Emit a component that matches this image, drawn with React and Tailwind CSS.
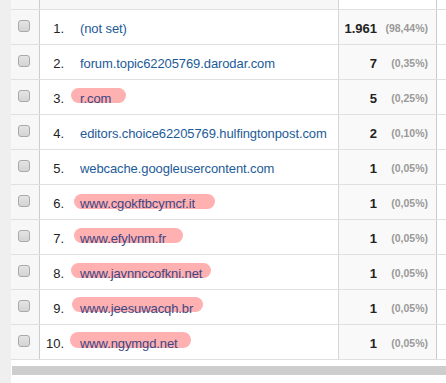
import React from "react";

const rows = [
  { n: "1.", t: "(not set)", c: "1.961", p: "(98,44%)" },
  { n: "2.", t: "forum.topic62205769.darodar.com", c: "7", p: "(0,35%)" },
  { n: "3.", t: "r.com", c: "5", p: "(0,25%)", pill: { l: 31, w: 55, t: 8, h: 15 } },
  { n: "4.", t: "editors.choice62205769.hulfingtonpost.com", c: "2", p: "(0,10%)" },
  { n: "5.", t: "webcache.googleusercontent.com", c: "1", p: "(0,05%)" },
  { n: "6.", t: "www.cgokftbcymcf.it", c: "1", p: "(0,05%)", pill: { l: 34, w: 141, t: 9, h: 15 } },
  { n: "7.", t: "www.efylvnm.fr", c: "1", p: "(0,05%)", pill: { l: 34, w: 109, t: 8, h: 15 } },
  { n: "8.", t: "www.javnnccofkni.net", c: "1", p: "(0,05%)", pill: { l: 31, w: 140, t: 8, h: 15 } },
  { n: "9.", t: "www.jeesuwacqh.br", c: "1", p: "(0,05%)", pill: { l: 32, w: 131, t: 7, h: 15 } },
  { n: "10.", t: "www.ngymgd.net", c: "1", p: "(0,05%)", pill: { l: 30, w: 121, t: 7, h: 16 } },
];

function Checkbox() {
  return (
    <div className="w-[12px] h-[12px] rounded-[3px] border border-[#a9a9a9] bg-gradient-to-b from-[#e4e4e4] to-[#d4d4d4]" />
  );
}

export default function App() {
  return (
    <div
      className="flex w-[446px] h-[383px] bg-white overflow-hidden"
      style={{ fontFamily: '"Liberation Sans", Arial, sans-serif' }}
    >
      <div className="w-[11px] shrink-0 bg-[#efefef]" />
      <div className="flex flex-col w-[435px]">
        {/* header strip */}
        <div className="flex h-[10px] border-b border-[#e0e0e0]">
          <div className="w-[29px] shrink-0 bg-[#f7f7f7] border-r border-[#cccccc]" />
          <div className="w-[299px] shrink-0 bg-[#f7f7f7] border-r border-[#d6d6d6]" />
          <div className="w-[98px] shrink-0 bg-white border-r border-[#cccccc]" />
          <div className="flex-1 bg-white" />
        </div>
        {rows.map((r) => (
          <div key={r.n} className="flex h-[35px] border-b border-[#e0e0e0]">
            <div className="w-[29px] shrink-0 bg-[#f7f7f7] border-r border-[#cccccc] pl-[7px] pt-[10px]">
              <Checkbox />
            </div>
            <div className="relative w-[299px] shrink-0 bg-white border-r border-[#d6d6d6] flex items-center pt-[2px] text-[13px] leading-[15px]">
              <span className="w-[24px] shrink-0 text-right text-[#222222]">{r.n}</span>
              {r.pill && (
                <span
                  className="absolute rounded-full bg-[#ffb0b0]"
                  style={{ left: r.pill.l, width: r.pill.w, top: r.pill.t, height: r.pill.h }}
                />
              )}
              <span
                className={
                  "relative ml-[16px] whitespace-nowrap tracking-[-0.1px] " +
                  (r.pill ? "text-[#3d4684]" : "text-[#1d5b98]")
                }
              >
                {r.t}
              </span>
            </div>
            <div className="w-[98px] shrink-0 bg-[#f9f9f9] border-r border-[#cccccc] flex items-center pt-[2px]">
              <span className="w-[38px] text-right font-bold text-[13px] leading-[15px] text-[#222222]">
                {r.c}
              </span>
              <span className="w-[51px] text-right font-bold text-[10.5px] leading-[15px] text-[#999999]">
                {r.p}
              </span>
            </div>
            <div className="flex-1 bg-white" />
          </div>
        ))}
        <div className="h-[6px]" />
        <div className="h-[9px] ml-[1px] bg-[#cdcdcd]" />
      </div>
    </div>
  );
}
